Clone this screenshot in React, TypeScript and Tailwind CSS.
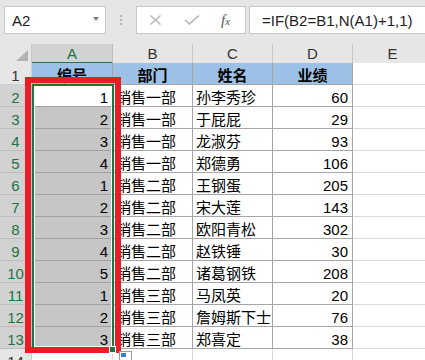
import React from "react"

type Row = [number, string, string, number]

const rows: Row[] = [
  [1, "销售一部", "孙李秀珍", 60],
  [2, "销售一部", "于屁屁", 29],
  [3, "销售一部", "龙淑芬", 93],
  [4, "销售一部", "郑德勇", 106],
  [1, "销售二部", "王钢蛋", 205],
  [2, "销售二部", "宋大莲", 143],
  [3, "销售二部", "欧阳青松", 302],
  [4, "销售二部", "赵铁锤", 30],
  [5, "销售二部", "诸葛钢铁", 208],
  [1, "销售三部", "马凤英", 20],
  [2, "销售三部", "詹姆斯下士", 76],
  [3, "销售三部", "郑喜定", 38],
]

const gridCols = "grid grid-cols-[32px_81px_80px_80px_80px_80px]"

function FormulaBar() {
  return (
    <div className="flex h-[44px] items-start pl-[4px] pt-[6px]">
      <div className="flex h-[28px] w-[102px] shrink-0 items-center justify-between border border-[#c6c6c6] bg-white pl-[7px] pr-[6px]">
        <span className="leading-none text-[#222]">A2</span>
        <span className="mb-[3px] h-0 w-0 border-x-[3px] border-t-[4px] border-x-transparent border-t-[#808080]" />
      </div>
      <div className="flex h-[28px] w-[30px] shrink-0 flex-col items-center justify-center gap-[2px]">
        <span className="h-[2px] w-[2px] bg-[#b5b5b5]" />
        <span className="h-[2px] w-[2px] bg-[#b5b5b5]" />
        <span className="h-[2px] w-[2px] bg-[#b5b5b5]" />
      </div>
      <div className="relative flex h-[28px] w-[110px] shrink-0 items-center border border-[#c6c6c6] bg-white">
        <svg className="ml-[12px]" width="13" height="10" viewBox="0 0 13 10">
          <path d="M1.5 0.5 L11.5 9.5 M11.5 0.5 L1.5 9.5" stroke="#b4b4b4" strokeWidth="1.4" fill="none" />
        </svg>
        <svg className="ml-[22px]" width="16" height="10" viewBox="0 0 16 10">
          <path d="M1 5 L5.5 9 L15 0.5" stroke="#b4b4b4" strokeWidth="1.6" fill="none" />
        </svg>
        <span className="ml-[21px] font-['Liberation_Serif',serif] text-[15px] italic leading-none text-[#555]">
          f<span className="text-[11px]">x</span>
        </span>
      </div>
      <div className="ml-[3px] flex h-[28px] w-[200px] shrink-0 items-center border border-[#c6c6c6] bg-white pl-[12px]">
        <span className="whitespace-nowrap text-[15px] leading-none text-[#222]">=IF(B2=B1,N(A1)+1,1)</span>
      </div>
    </div>
  )
}

function HeaderRow() {
  const letters = ["A", "B", "C", "D", "E"]
  return (
    <div className={`${gridCols} h-[19px]`}>
      <div className="flex items-end justify-end border-b border-r border-[#c8c8c8] pb-[2px] pr-[3px]">
        <svg width="12" height="11" viewBox="0 0 12 11">
          <polygon points="12,0 12,11 0,11" fill="#b4b4b4" />
        </svg>
      </div>
      {letters.map((l) =>
        l === "A" ? (
          <div
            key={l}
            className="border-b-2 border-r border-b-[#217346] border-r-[#bfbfbf] bg-[#d2d2d2] pt-[2px] text-center leading-[16px] text-[#217346]"
          >
            {l}
          </div>
        ) : (
          <div key={l} className="border-b border-r border-[#c8c8c8] pt-[2px] text-center leading-[16px] text-[#333]">
            {l}
          </div>
        )
      )}
    </div>
  )
}

function RowHead({ n, active }: { n: number; active: boolean }) {
  return (
    <div
      className={`flex items-end justify-center border-b border-r leading-[17px] ${
        active ? "border-[#bdbdbd] bg-[#d2d2d2] text-[#217346]" : "border-[#d0d0d0] bg-[#e6e6e6] text-[#333]"
      }`}
    >
      {n}
    </div>
  )
}

export default function App() {
  return (
    <div className="relative h-[360px] w-[425px] overflow-hidden bg-[#e6e6e6] font-['Liberation_Sans','Noto_Sans_CJK_SC',sans-serif] text-[15px] text-black">
      <FormulaBar />
      <HeaderRow />

      {/* row 1 - table header */}
      <div className={`${gridCols} h-[22px]`}>
        <RowHead n={1} active={false} />
        {["编号", "部门", "姓名", "业绩"].map((t) => (
          <div key={t} className="flex items-end justify-center border-b border-r border-[#a6a6a6] bg-[#9bc2e6] font-bold leading-[17px]">
            {t}
          </div>
        ))}
        <div className="border-b border-r border-[#d9d9d9] bg-white" />
      </div>

      {rows.map((r, i) => (
        <div key={i} className={`${gridCols} h-[22px]`}>
          <RowHead n={i + 2} active={true} />
          <div
            className={`flex items-end justify-end border-b border-r border-[#a0a0a0] pr-[4px] leading-[17px] ${
              i === 0 ? "bg-white" : "bg-[#c6c6c6]"
            }`}
          >
            {r[0]}
          </div>
          <div className="flex items-end overflow-hidden whitespace-nowrap border-b border-r border-[#a6a6a6] bg-white pl-[3px] leading-[17px]">
            {r[1]}
          </div>
          <div className="flex items-end overflow-hidden whitespace-nowrap border-b border-r border-[#a6a6a6] bg-white pl-[3px] leading-[17px]">
            {r[2]}
          </div>
          <div className="flex items-end justify-end border-b border-r border-[#a6a6a6] bg-white pr-[4px] leading-[17px]">
            {r[3]}
          </div>
          <div className="border-b border-r border-[#d9d9d9] bg-white" />
        </div>
      ))}

      {/* row 14 */}
      <div className={`${gridCols} h-[22px]`}>
        <RowHead n={14} active={false} />
        {[0, 1, 2, 3, 4].map((k) => (
          <div key={k} className="border-b border-r border-[#d9d9d9] bg-white" />
        ))}
      </div>

      {/* selection outline A2:A13 */}
      <div className="absolute left-[32px] top-[84px] h-[265px] w-[82px] border-2 border-[#217346]">
        <div className="h-full w-full border border-white" />
      </div>

      {/* red annotation frame */}
      <div className="absolute left-[25px] top-[77px] h-[276px] w-[96px] border-[6px] border-[#ec1c24]" />

      {/* fill handle */}
      <div className="absolute left-[109px] top-[346px] h-[7px] w-[7px] border border-white bg-[#217346]" />

      {/* quick analysis button */}
      <div className="absolute left-[119px] top-[351px] flex h-[12px] w-[13px] items-start border border-[#9a9a9a] bg-white p-[1px]">
        <div className="h-[4px] w-[5px] bg-[#3c7ad6]" />
      </div>
    </div>
  )
}
